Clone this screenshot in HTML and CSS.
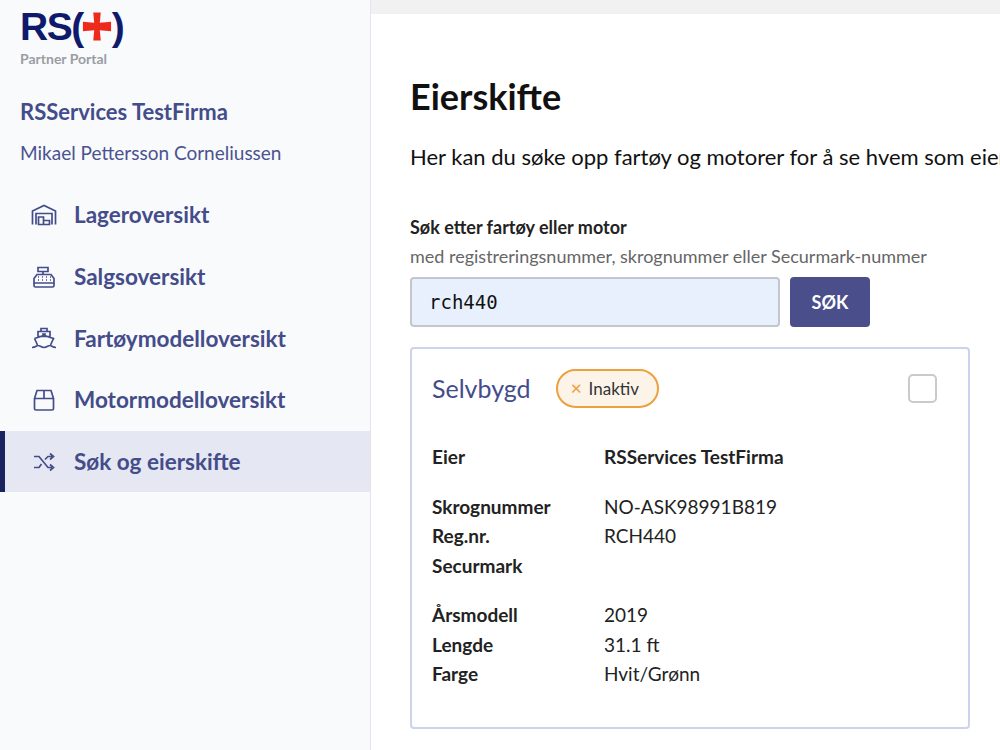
FILE: index.html
```html
<!DOCTYPE html>
<html lang="no">
<head>
    <meta charset="UTF-8">
    <meta name="viewport" content="width=device-width, initial-scale=1.0">
    <title>Eierskifte - Partner Portal</title>
    <link rel="stylesheet" href="styles.css">
</head>
<body>
<div class="layout">
    <aside class="sidebar">
        <div class="logo">
            <div class="logo-mark">
                <span class="logo-text">RS(</span>
                <svg class="logo-cross" viewBox="0 0 32 32"><path d="M12 1h8l-1 11 12-1v10l-12-1 1 11h-8l1-11-12 1V11l12 1z" fill="#ee2a1c"/></svg>
                <span class="logo-text">)</span>
            </div>
            <div class="logo-sub">Partner Portal</div>
        </div>
        <div class="company">RSServices TestFirma</div>
        <div class="user">Mikael Pettersson Corneliussen</div>
        <nav class="nav">
            <a class="nav-item">
                <svg class="nav-icon" viewBox="0 0 26 22"><path d="M1.5 20.5V7L13 1.5 24.5 7v13.500M5 20.500V9.500h16v11M7.500 13h5v7.500h-5zM12.500 16.500h6v4h-6z"/></svg>
                Lageroversikt
            </a>
            <a class="nav-item">
                <svg class="nav-icon" viewBox="0 0 26 22"><path d="M7 1.500h10v4H7zM12 5.500v3M6 8.500h14l3 4v7a1.500 1.500 0 0 1-1.500 1.500h-17A1.500 1.500 0 0 1 3 19.500v-7zM3 17h20M7 11h1M11 11h1M15 11h1M19 11h1M7 14h1M11 14h1M15 14h1M19 14h1"/></svg>
                Salgsoversikt
            </a>
            <a class="nav-item">
                <svg class="nav-icon" viewBox="0 0 26 22"><path d="M10 1.500h6v3h-6zM7 4.500h12v5H7zM3.500 11.500 13 8.500l9.500 3-3 6.500M6.500 18l-3-6.500M1 20.500c4 0 4-2 6-2s3 2 6 2 4-2 6-2 2 2 6 2M11 7h4"/></svg>
                Fartøymodelloversikt
            </a>
            <a class="nav-item">
                <svg class="nav-icon" viewBox="0 0 26 22"><path d="M3.500 9.500 6 1.500h14l2.500 8v10a1.500 1.500 0 0 1-1.500 1.500H5a1.500 1.500 0 0 1-1.500-1.500zM3.500 9.500h19M13 1.500v8"/></svg>
                Motormodelloversikt
            </a>
            <a class="nav-item active">
                <svg class="nav-icon" viewBox="0 0 26 22"><path d="M3 5.500h5l9 11h4M3 16.500h5l2.500-3.500M14 8.500l3-3h4M19 2.500l3.500 3-3.500 3M19 13.500l3.500 3-3.500 3"/></svg>
                Søk og eierskifte
            </a>
        </nav>
    </aside>

    <main class="main">
        <div class="top-bar"></div>
        <div class="content">
            <h1>Eierskifte</h1>
            <p class="intro">Her kan du søke opp fartøy og motorer for å se hvem som eier dem.</p>

            <label class="search-label">Søk etter fartøy eller motor</label>
            <div class="search-hint">med registreringsnummer, skrognummer eller Securmark-nummer</div>
            <div class="search-row">
                <input class="search-input" type="text" value="rch440">
                <button class="search-button">SØK</button>
            </div>

            <div class="result-card">
                <div class="result-header">
                    <h2>Selvbygd</h2>
                    <span class="badge"><span class="badge-x">✕</span>Inaktiv</span>
                    <span class="checkbox"></span>
                </div>
                <div class="details">
                    <div class="detail-group">
                        <div class="detail-row"><span class="detail-label">Eier</span><span class="detail-value owner">RSServices TestFirma</span></div>
                    </div>
                    <div class="detail-group">
                        <div class="detail-row"><span class="detail-label">Skrognummer</span><span class="detail-value">NO-ASK98991B819</span></div>
                        <div class="detail-row"><span class="detail-label">Reg.nr.</span><span class="detail-value">RCH440</span></div>
                        <div class="detail-row"><span class="detail-label">Securmark</span><span class="detail-value"></span></div>
                    </div>
                    <div class="detail-group">
                        <div class="detail-row"><span class="detail-label">Årsmodell</span><span class="detail-value">2019</span></div>
                        <div class="detail-row"><span class="detail-label">Lengde</span><span class="detail-value">31.1 ft</span></div>
                        <div class="detail-row"><span class="detail-label">Farge</span><span class="detail-value">Hvit/Grønn</span></div>
                    </div>
                </div>
            </div>
        </div>
    </main>
</div>
</body>
</html>
```

FILE: styles.css
```css
* {
    margin: 0;
    padding: 0;
    box-sizing: border-box;
}

html, body {
    height: 100%;
    overflow: hidden;
}

body {
    font-family: Lato, "Liberation Sans", sans-serif;
    background-color: white;
    color: #111;
}

.layout {
    display: flex;
    height: 750px;
    overflow: hidden;
}

.sidebar {
    width: 371px;
    flex-shrink: 0;
    background-color: #f9fafc;
    border-right: 1px solid #e4e5ea;
    padding-top: 8px;
}

.logo {
    padding-left: 20px;
}

.logo-mark {
    display: flex;
    align-items: center;
    height: 37px;
    color: #0f1a6b;
    font-family: "Liberation Sans", sans-serif;
    font-weight: bold;
}

.logo-text {
    font-size: 39px;
    line-height: 37px;
    letter-spacing: -1.5px;
}

.logo-cross {
    width: 30px;
    height: 31px;
    margin: 0 0 0 -1px;
}

.logo-sub {
    color: #9a9da3;
    font-size: 14px;
    font-weight: bold;
    line-height: 17px;
    margin-top: 5px;
}

.company {
    color: #444c8a;
    font-size: 22px;
    font-weight: bold;
    line-height: 28px;
    margin: 31px 0 0 20px;
}

.user {
    color: #4a5290;
    font-size: 19px;
    line-height: 26px;
    margin: 14px 0 0 20px;
}

.nav {
    margin-top: 18px;
}

.nav-item {
    display: flex;
    align-items: center;
    height: 61.7px;
    padding-left: 31px;
    color: #444c8a;
    font-size: 22.500px;
    font-weight: bold;
}

.nav-item.active {
    background-color: #e5e7f2;
    border-left: 5px solid #1b2260;
    padding-left: 26px;
}

.nav-icon {
    width: 26px;
    height: 22px;
    margin-right: 17px;
    fill: none;
    stroke: #444c8a;
    stroke-width: 1.700;
}

.main {
    flex: 1;
    min-width: 0;
}

.top-bar {
    height: 14px;
    background-color: #f1f1f1;
}

.content {
    padding: 57px 0 0 39px;
}

h1 {
    font-size: 36px;
    font-weight: bold;
    line-height: 50px;
    color: #111;
}

.intro {
    font-size: 22px;
    line-height: 30px;
    margin-top: 21px;
    white-space: nowrap;
}

.search-label {
    display: block;
    font-size: 18px;
    font-weight: bold;
    line-height: 24px;
    margin-top: 43px;
    color: #222;
}

.search-hint {
    color: #666;
    font-size: 18px;
    line-height: 24px;
    margin-top: 5px;
    white-space: nowrap;
}

.search-row {
    display: flex;
    gap: 10px;
    margin-top: 9px;
}

.search-input {
    width: 370px;
    height: 50px;
    background-color: #e8f0fe;
    border: 2px solid #c3c7cc;
    border-radius: 4px;
    padding: 0 17px;
    font-family: "DejaVu Sans Mono", monospace;
    font-size: 19px;
    color: #111;
}

.search-button {
    width: 80px;
    height: 50px;
    background-color: #4a4f8c;
    color: white;
    border: none;
    border-radius: 4px;
    font-family: Lato, sans-serif;
    font-size: 18px;
    font-weight: bold;
}

.result-card {
    width: 560px;
    height: 382px;
    margin-top: 20px;
    border: 2px solid #cdd3ea;
    border-radius: 4px;
    padding: 0 20px;
}

.result-header {
    display: flex;
    align-items: center;
    height: 78px;
}

.result-header h2 {
    color: #444c8a;
    font-size: 25px;
    font-weight: normal;
}

.badge {
    display: flex;
    align-items: center;
    height: 39px;
    margin-left: 25px;
    padding: 0 18px 0 12px;
    background-color: #fdf4e9;
    border: 2px solid #eda03e;
    border-radius: 20px;
    font-size: 17px;
    color: #333;
}

.badge-x {
    color: #eda03e;
    font-size: 15px;
    margin-right: 6px;
}

.checkbox {
    width: 29px;
    height: 29px;
    margin-left: auto;
    margin-right: 11px;
    border: 2px solid #c9cacc;
    border-radius: 5px;
}

.details {
    margin-top: 15px;
}

.detail-group {
    margin-bottom: 20px;
}

.detail-row {
    display: flex;
    height: 29.500px;
    line-height: 29.500px;
    font-size: 19px;
    color: #222;
}

.detail-label {
    width: 172px;
    font-weight: bold;
}

.detail-value.owner {
    font-weight: bold;
}
```
